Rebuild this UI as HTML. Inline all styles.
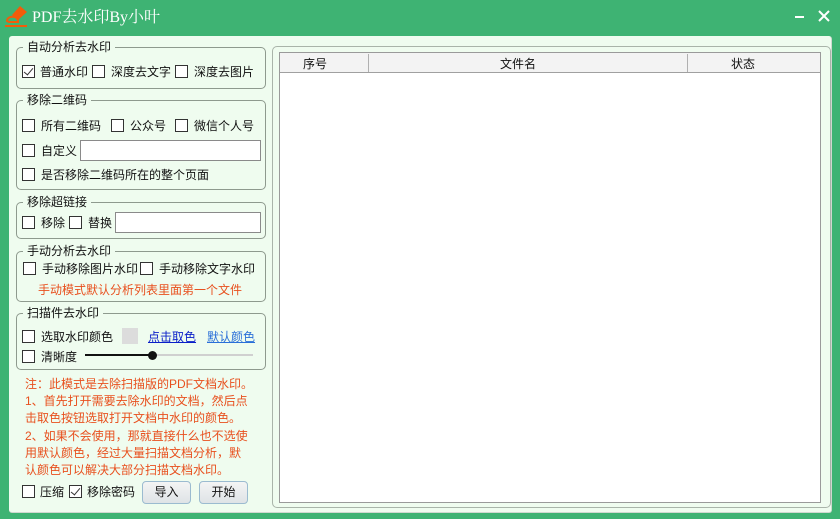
<!DOCTYPE html>
<html><head><meta charset="utf-8"><style>
*{margin:0;padding:0;box-sizing:border-box}
body{width:840px;height:519px;background:#3eb373;position:relative;overflow:hidden;font-family:"Liberation Sans","Noto Sans CJK SC",sans-serif;font-size:12px;color:#111}
.a{position:absolute;white-space:nowrap}
.panel{position:absolute;left:9px;top:36px;width:823px;height:477px;background:#effcef;border-radius:3px;border-right:1px solid #cfd8cf;border-bottom:1px solid #cfd8cf}
.g{position:absolute;border:1px solid #8e9a8e;border-radius:5px}
.lg{position:absolute;top:-9px;left:6px;background:#effcef;padding:0 4px;line-height:16px}
.cb{position:absolute;width:13px;height:13px;border:1px solid #333;background:#fff}
.cb.c::after{content:"";position:absolute;left:3px;top:0px;width:4px;height:8px;border:solid #333;border-width:0 1.3px 1.3px 0;transform:rotate(40deg)}
.t{position:absolute;line-height:14px;white-space:nowrap}
.in{position:absolute;background:#fff;border:1px solid #8a8a8a}
.red{color:#e8501e}
.btn{position:absolute;width:49px;height:23px;border:1px solid #9bbbd0;border-radius:4px;background:linear-gradient(#f4f4f4,#dfe3e6);text-align:center;line-height:21px}
</style></head><body>
<svg class="a" style="left:3px;top:4px" width="26" height="26" viewBox="0 0 26 26">
<path d="M9 11 L17 2 L24 8 L15 16 Z" fill="#f25c0a"/>
<path d="M4 17 C4 12 13 11 15 16 L15 18 L6 18 Z" fill="none" stroke="#f25c0a" stroke-width="2"/>
<rect x="2" y="21" width="22" height="2" fill="#f25c0a"/>
</svg>
<div class="a" style="left:32px;top:8px;color:#fff;font-family:'Liberation Serif','Noto Serif CJK SC',serif;font-size:16px;line-height:20px">PDF去水印By小叶</div>
<div class="a" style="left:795px;top:16px;width:9px;height:2px;background:#fff"></div>
<svg class="a" style="left:818px;top:10px" width="12" height="12"><path d="M1 1L11 11M11 1L1 11" stroke="#fff" stroke-width="2"/></svg>
<div class="panel"></div>

<div class="g" style="left:16px;top:47px;width:250px;height:42px"><div class="lg">自动分析去水印</div></div>
<div class="cb c" style="left:22px;top:65px"></div><div class="t" style="left:40px;top:65px">普通水印</div>
<div class="cb" style="left:92px;top:65px"></div><div class="t" style="left:111px;top:65px">深度去文字</div>
<div class="cb" style="left:175px;top:65px"></div><div class="t" style="left:194px;top:65px">深度去图片</div>

<div class="g" style="left:16px;top:100px;width:250px;height:90px"><div class="lg">移除二维码</div></div>
<div class="cb" style="left:22px;top:119px"></div><div class="t" style="left:41px;top:119px">所有二维码</div>
<div class="cb" style="left:111px;top:119px"></div><div class="t" style="left:130px;top:119px">公众号</div>
<div class="cb" style="left:175px;top:119px"></div><div class="t" style="left:194px;top:119px">微信个人号</div>
<div class="cb" style="left:22px;top:144px"></div><div class="t" style="left:41px;top:144px">自定义</div>
<div class="in" style="left:80px;top:140px;width:181px;height:21px"></div>
<div class="cb" style="left:22px;top:168px"></div><div class="t" style="left:41px;top:168px">是否移除二维码所在的整个页面</div>

<div class="g" style="left:16px;top:202px;width:250px;height:37px"><div class="lg">移除超链接</div></div>
<div class="cb" style="left:22px;top:216px"></div><div class="t" style="left:41px;top:216px">移除</div>
<div class="cb" style="left:69px;top:216px"></div><div class="t" style="left:88px;top:216px">替换</div>
<div class="in" style="left:115px;top:212px;width:146px;height:21px"></div>

<div class="g" style="left:16px;top:251px;width:250px;height:51px"><div class="lg">手动分析去水印</div></div>
<div class="cb" style="left:23px;top:262px"></div><div class="t" style="left:42px;top:262px">手动移除图片水印</div>
<div class="cb" style="left:140px;top:262px"></div><div class="t" style="left:159px;top:262px">手动移除文字水印</div>
<div class="t red" style="left:38px;top:283px">手动模式默认分析列表里面第一个文件</div>

<div class="g" style="left:16px;top:313px;width:250px;height:57px"><div class="lg">扫描件去水印</div></div>
<div class="cb" style="left:22px;top:330px"></div><div class="t" style="left:41px;top:330px">选取水印颜色</div>
<div class="a" style="left:122px;top:328px;width:16px;height:16px;background:#dcdcdc"></div>
<div class="t" style="left:148px;top:330px;color:#0a1ec8;text-decoration:underline">点击取色</div>
<div class="t" style="left:207px;top:330px;color:#2a6fd8;text-decoration:underline">默认颜色</div>
<div class="cb" style="left:22px;top:350px"></div><div class="t" style="left:41px;top:350px">清晰度</div>
<div class="a" style="left:85px;top:354px;width:68px;height:2px;background:#111"></div>
<div class="a" style="left:153px;top:354px;width:100px;height:2px;background:#d0d0d0"></div>
<div class="a" style="left:148px;top:351px;width:9px;height:9px;border-radius:50%;background:#111"></div>

<div class="t red" style="left:25px;top:376px;line-height:17.2px;white-space:normal;width:240px">注：此模式是去除扫描版的PDF文档水印。<br>1、首先打开需要去除水印的文档，然后点<br>击取色按钮选取打开文档中水印的颜色。<br>2、如果不会使用，那就直接什么也不选使<br>用默认颜色，经过大量扫描文档分析，默<br>认颜色可以解决大部分扫描文档水印。</div>

<div class="cb" style="left:22px;top:485px"></div><div class="t" style="left:40px;top:485px">压缩</div>
<div class="cb c" style="left:69px;top:485px"></div><div class="t" style="left:87px;top:485px">移除密码</div>
<div class="btn" style="left:142px;top:481px">导入</div>
<div class="btn" style="left:199px;top:481px">开始</div>

<div class="g" style="left:272px;top:46px;width:559px;height:462px;border-color:#a9b4a9"></div>
<div class="a" style="left:279px;top:52px;width:542px;height:451px;background:#fff;border:1px solid #9a9a9a"></div>
<div class="a" style="left:280px;top:53px;width:540px;height:20px;background:#f3f3f3;border-bottom:1px solid #a0a0a0"></div>
<div class="a" style="left:368px;top:54px;width:1px;height:18px;background:#b0b0b0"></div>
<div class="a" style="left:687px;top:54px;width:1px;height:18px;background:#b0b0b0"></div>
<div class="t" style="left:303px;top:57px">序号</div>
<div class="t" style="left:500px;top:57px">文件名</div>
<div class="t" style="left:731px;top:57px">状态</div>
</body></html>
